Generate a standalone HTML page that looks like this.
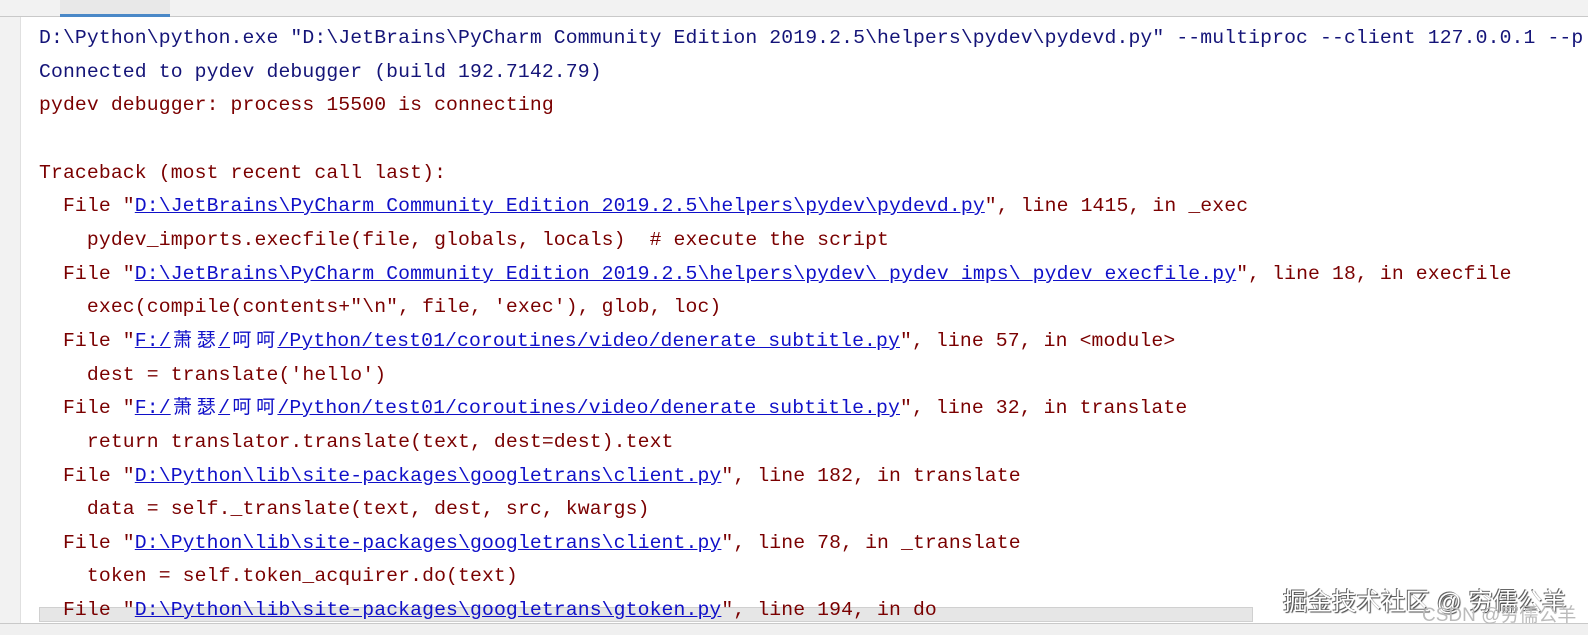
<!DOCTYPE html>
<html><head><meta charset="utf-8"><style>
body{margin:0;width:1588px;height:634px;overflow:hidden;background:#fff;position:relative;font-family:"Liberation Mono",monospace}
.top{position:absolute;left:0;top:0;width:1588px;height:16px;background:#f2f2f2;border-bottom:1px solid #c9c9c9}
.tab{position:absolute;left:60px;top:0;width:110px;height:14px;border-bottom:3px solid #4a88c7;background:#e8e8e8}
.gut{position:absolute;left:0;top:17px;width:20px;height:606px;background:#f2f2f2;border-right:1px solid #e0e0e0}
.bot{position:absolute;left:0;top:623px;width:1588px;height:11px;background:#f0f0f0;border-top:1px solid #c9c9c9}
.sb{position:absolute;left:39px;top:607px;width:1212px;height:13px;background:#e6e6e6;border:1px solid #d0d0d0}
.code{position:absolute;left:39px;top:0;font-size:19.75px;letter-spacing:0.12px;color:#7a0000}
.code div{position:absolute;left:0;height:33px;line-height:33px;white-space:pre}
.b{color:#141478}
a{color:#1010c8;text-decoration:underline}
.c{display:inline-block;width:23.7px;text-align:center;font-family:"Noto Sans CJK SC",sans-serif;font-size:19px;line-height:20px;letter-spacing:0}
.wm{position:absolute;left:1283px;top:583px;font-family:"Liberation Sans","Noto Sans CJK SC",sans-serif;font-size:24.5px;color:#fff;text-shadow:1px 1px 1px #444,-1px -1px 0 #666;white-space:nowrap}
.wm2{position:absolute;left:1422px;top:600px;font-family:"Liberation Sans","Noto Sans CJK SC",sans-serif;font-size:19px;color:#bbb;white-space:nowrap}
</style></head><body>
<div class="top"><div class="tab"></div></div>
<div class="gut"></div>
<div class="sb"></div>
<div class="code"><div class="b" style="top:22px">D:\Python\python.exe "D:\JetBrains\PyCharm Community Edition 2019.2.5\helpers\pydev\pydevd.py" --multiproc --client 127.0.0.1 --p</div><div class="b" style="top:56px">Connected to pydev debugger (build 192.7142.79)</div><div style="top:89px">pydev debugger: process 15500 is connecting</div><div style="top:157px">Traceback (most recent call last):</div><div style="top:190px">  File "<a>D:\JetBrains\PyCharm Community Edition 2019.2.5\helpers\pydev\pydevd.py</a>", line 1415, in _exec</div><div style="top:224px">    pydev_imports.execfile(file, globals, locals)  # execute the script</div><div style="top:258px">  File "<a>D:\JetBrains\PyCharm Community Edition 2019.2.5\helpers\pydev\_pydev_imps\_pydev_execfile.py</a>", line 18, in execfile</div><div style="top:291px">    exec(compile(contents+"\n", file, 'exec'), glob, loc)</div><div style="top:325px">  File "<a>F:/<span class="c">萧</span><span class="c">瑟</span>/<span class="c">呵</span><span class="c">呵</span>/Python/test01/coroutines/video/denerate_subtitle.py</a>", line 57, in &lt;module&gt;</div><div style="top:359px">    dest = translate('hello')</div><div style="top:392px">  File "<a>F:/<span class="c">萧</span><span class="c">瑟</span>/<span class="c">呵</span><span class="c">呵</span>/Python/test01/coroutines/video/denerate_subtitle.py</a>", line 32, in translate</div><div style="top:426px">    return translator.translate(text, dest=dest).text</div><div style="top:460px">  File "<a>D:\Python\lib\site-packages\googletrans\client.py</a>", line 182, in translate</div><div style="top:493px">    data = self._translate(text, dest, src, kwargs)</div><div style="top:527px">  File "<a>D:\Python\lib\site-packages\googletrans\client.py</a>", line 78, in _translate</div><div style="top:560px">    token = self.token_acquirer.do(text)</div><div style="top:594px">  File "<a>D:\Python\lib\site-packages\googletrans\gtoken.py</a>", line 194, in do</div></div>
<div class="bot"></div>
<div class="wm">掘金技术社区 @ 穷儒公羊</div>
<div class="wm2">CSDN @穷儒公羊</div>
</body></html>
